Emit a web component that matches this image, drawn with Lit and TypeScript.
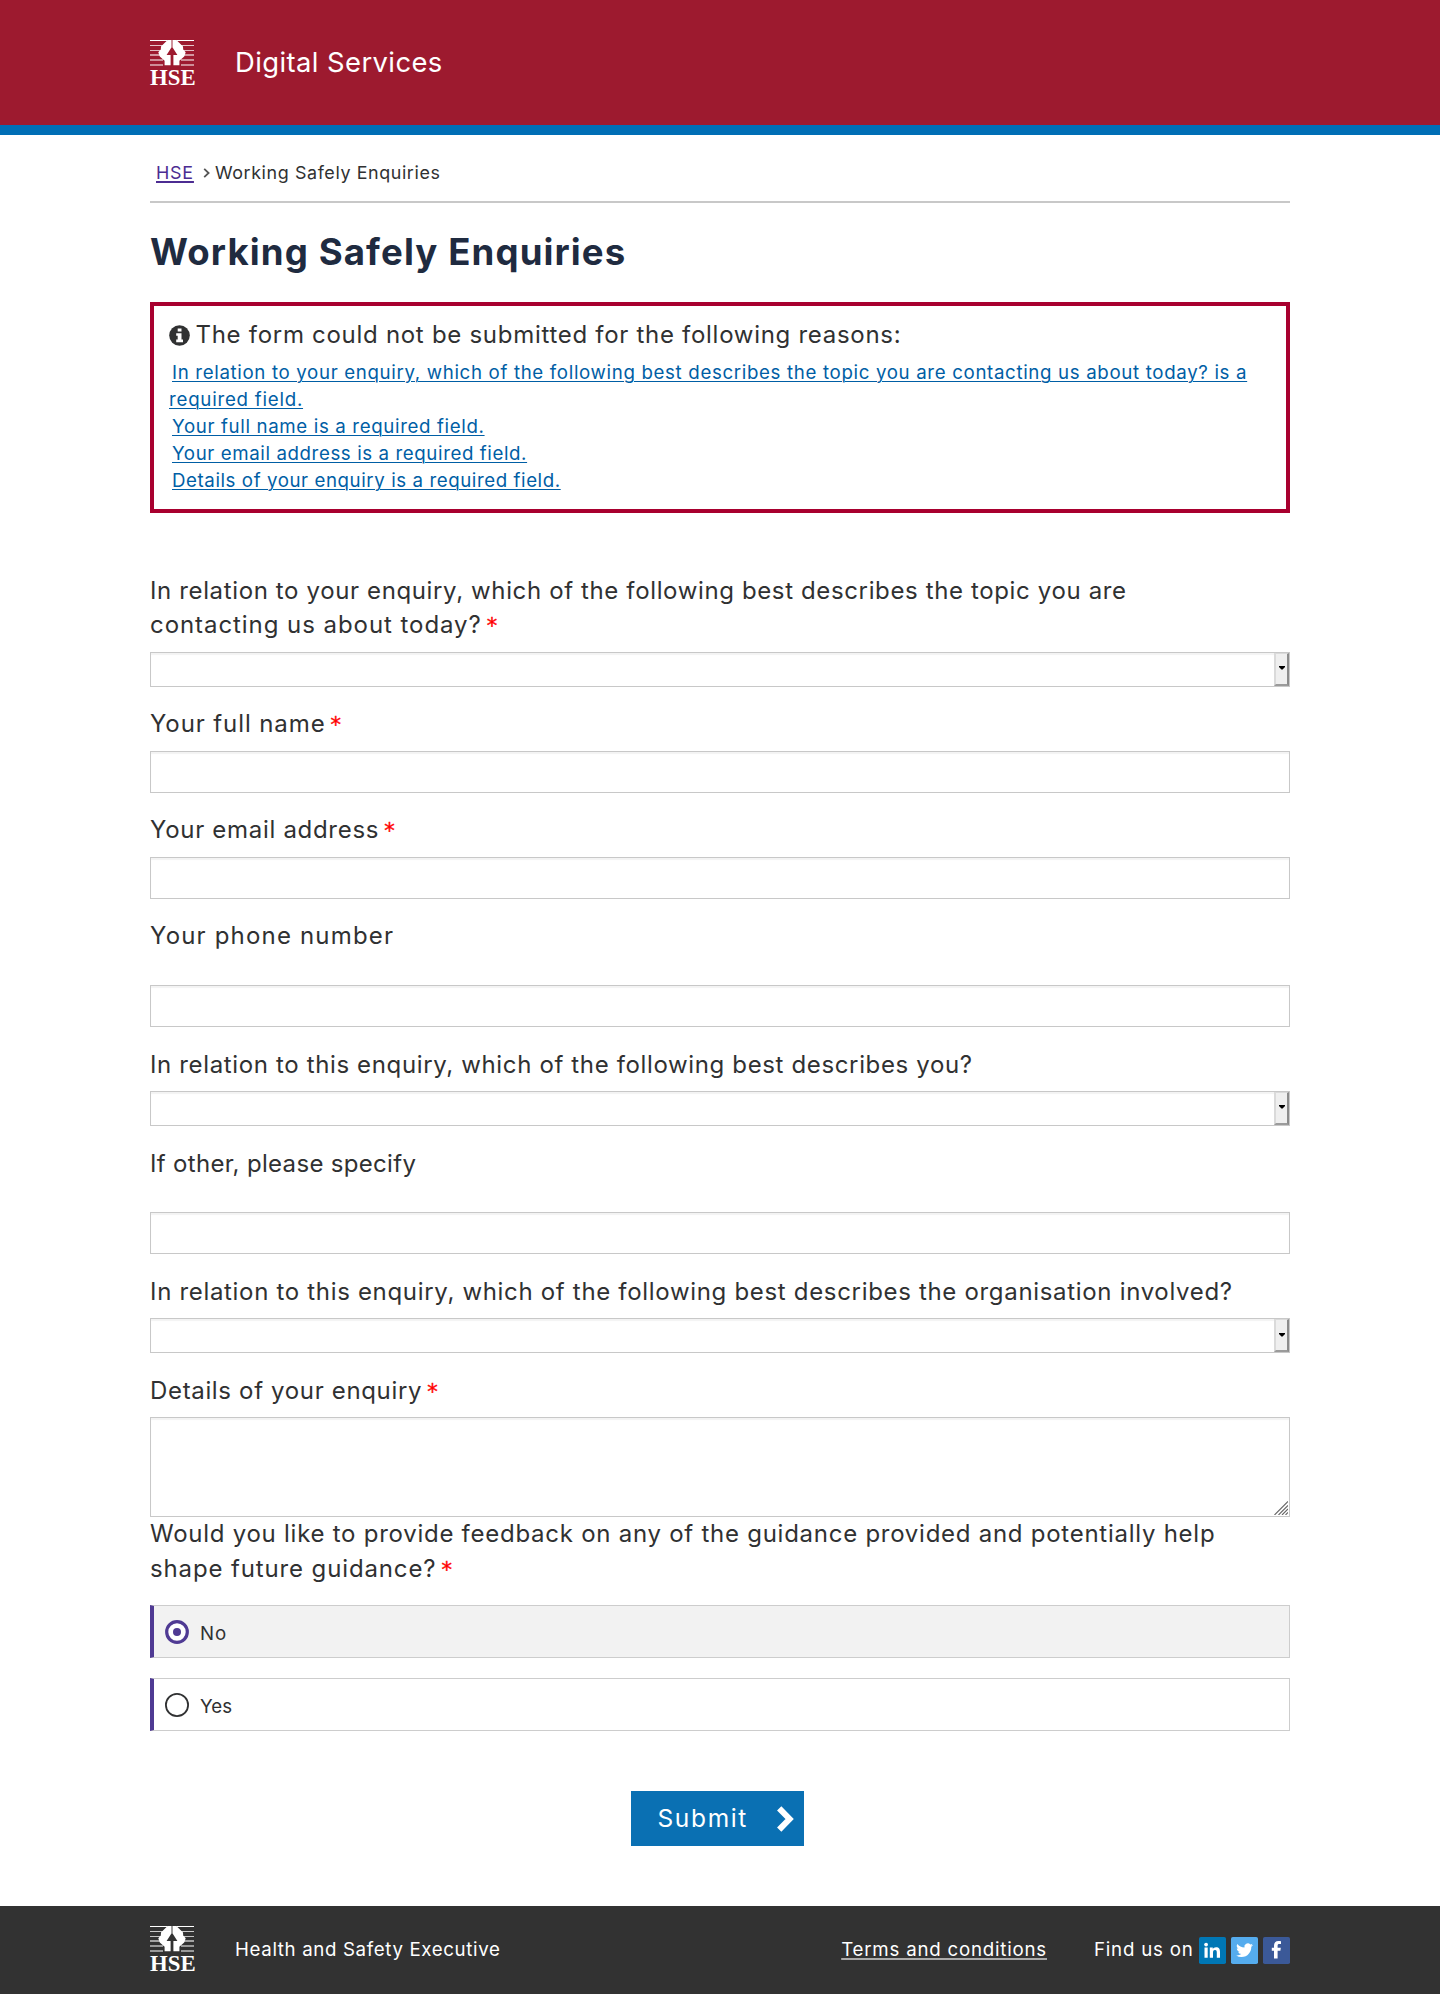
import { LitElement, html, svg, css, nothing } from "lit";
import { customElement, property, state } from "lit/decorators.js";

/** A run of text and the tracking (px) it is set with. */
type Line = [text: string, tracking: number];

interface Field {
  kind: "select" | "input" | "textarea";
  lines: Line[];
  required?: boolean;
  roomy?: boolean;
}

const run = ([text, tracking]: Line) => html`<span style="letter-spacing:${tracking}px">${text}</span>`;

const ERRORS: Line[][] = [
  [
    ["In relation to your enquiry, which of the following best describes the topic you are contacting us about today? is a", 0.655],
    ["required field.", 0.76],
  ],
  [["Your full name is a required field.", 0.64]],
  [["Your email address is a required field.", 0.595]],
  [["Details of your enquiry is a required field.", 0.575]],
];

const FIELDS: Field[] = [
  {
    kind: "select",
    required: true,
    lines: [
      ["In relation to your enquiry, which of the following best describes the topic you are", 0.63],
      ["contacting us about today?", 0.94],
    ],
  },
  { kind: "input", required: true, lines: [["Your full name", 0.9]] },
  { kind: "input", required: true, lines: [["Your email address", 0.7]] },
  { kind: "input", roomy: true, lines: [["Your phone number", 1.18]] },
  { kind: "select", lines: [["In relation to this enquiry, which of the following best describes you?", 0.64]] },
  { kind: "input", roomy: true, lines: [["If other, please specify", 0.32]] },
  {
    kind: "select",
    lines: [["In relation to this enquiry, which of the following best describes the organisation involved?", 0.68]],
  },
  { kind: "textarea", required: true, lines: [["Details of your enquiry", 0.66]] },
];

const starStyles = css`
  .star {
    color: #f00;
    font-family: "DejaVu Sans", sans-serif;
    font-size: 21px;
    margin-left: 5px;
    line-height: 20px;
    -webkit-text-stroke: 0.4px #f00;
  }
`;

@customElement("hse-logo")
export class HseLogo extends LitElement {
  static styles = css`
    :host {
      display: block;
      width: 45px;
      height: 45px;
    }
    svg {
      display: block;
      overflow: visible;
    }
    .word {
      font: 700 23.5px "Liberation Serif", "Times New Roman", serif;
      fill: #fff;
    }
    .gap {
      fill: var(--logo-ground);
    }
  `;
  render() {
    const bars: [number, number, number][] = [
      [0, 1, 1], [5, 1, 0.75], [10, 1, 0.7], [14, 2, 0.55], [19, 2, 0.5], [24, 2, 0.5],
    ];
    return html`<svg width="45" height="45" viewBox="0 0 45 45" role="img" aria-label="HSE">
      ${bars.map(([y, h, o]) => svg`<rect x="0" y=${y} width="44" height=${h} fill="#fff" fill-opacity=${o} />`)}
      <path class="gap" d="M18 0H26L31 5V26H13V5Z" />
      <path fill="#fff" d="M17.6 0H21.4V7.6L16.6 15H20.6V25.3H14.6V20.8L9.8 16.6L8.3 12.2L10.8 9.6L11 6.6Z" />
      <path fill="#fff" d="M26.4 0H22.6V7.6L27.4 15H23.4V25.3H29.4V20.8L34.2 16.6L35.7 12.2L33.2 9.6L33 6.6Z" />
      <rect x="21.4" y="0" width="1.2" height="7.6" fill="#fff" fill-opacity=".35" />
      <text class="word" x="0" y="44.7" textLength="45.6" lengthAdjust="spacingAndGlyphs">HSE</text>
    </svg>`;
  }
}

@customElement("form-field")
export class FormField extends LitElement {
  @property({ attribute: false }) field!: Field;

  static styles = [
    starStyles,
    css`
    :host {
      display: block;
    }
    .label {
      display: block;
      padding-top: 1px;
      margin-bottom: 8.9px;
      font-size: 24px;
      line-height: 34.5px;
      white-space: nowrap;
    }
    .label.roomy {
      margin-bottom: 30.9px;
    }
    .row {
      display: block;
    }
    .control {
      display: block;
      box-sizing: border-box;
      width: 100%;
      height: 42px;
      margin: 0;
      padding: 4px 8px;
      border: 1px solid #c8c8c8;
      border-radius: 0;
      background: #fff;
      box-shadow: inset 0 2px 1px #f3f3f3;
      font: inherit;
      font-size: 18px;
      outline: none;
      resize: none;
    }
    textarea.control {
      height: 100px;
    }
    .combo {
      display: flex;
      justify-content: flex-end;
      height: 35px;
      padding: 0;
    }
    .drop {
      box-sizing: border-box;
      display: flex;
      align-items: center;
      justify-content: center;
      width: 15px;
      height: 33px;
      padding: 0;
      background: #efefef;
      border-style: solid;
      border-width: 1px 2px 2px 2px;
      border-color: #dadada #8b8b8b #9b9b9b #dadada;
    }
    .drop svg {
      margin-top: -1px;
    }
    .area {
      position: relative;
    }
    .grip {
      position: absolute;
      right: 2px;
      bottom: 2px;
    }
  `,
  ];

  private control() {
    switch (this.field.kind) {
      case "select":
        return html`<div class="control combo" role="combobox" aria-expanded="false">
          <button class="drop" type="button" aria-label="Open">
            <svg width="6" height="4" viewBox="0 0 6 4"><path d="M0 0H6V1L3.6 3.4H2.4L0 1Z" fill="#000" /></svg>
          </button>
        </div>`;
      case "textarea":
        return html`<div class="area">
          <textarea class="control"></textarea>
          <svg class="grip" width="14" height="14" viewBox="0 0 14 14">
            <path d="M.5 14L14 .5M4.5 14L14 4.5M8 14L14 8M11.5 14L14 11.5" stroke="#666" stroke-width="1.1" fill="none" />
          </svg>
        </div>`;
      default:
        return html`<input class="control" type="text" />`;
    }
  }

  render() {
    const { lines, required, roomy } = this.field;
    return html`
      <label class="label ${roomy ? "roomy" : ""}">
        ${lines.map(
          (line, i) => html`<span class="row">${run(line)}${required && i === lines.length - 1
            ? html`<span class="star">*</span>`
            : nothing}</span>`,
        )}
      </label>
      ${this.control()}
    `;
  }
}

@customElement("app-root")
export class AppRoot extends LitElement {
  @state() private feedback = "No";

  static styles = [
    starStyles,
    css`
    :host {
      display: block;
      background: #fff;
      color: #303132;
      font-family: Inter, "Open Sans", sans-serif;
      font-size: 18.7px;
      font-kerning: normal;
    }
    * {
      box-sizing: border-box;
    }
    .wrap {
      width: 1140px;
      margin: 0 auto;
    }
    .top {
      background: #9d1a2f;
      border-bottom: 10px solid #006eb5;
      --logo-ground: #9d1a2f;
    }
    .top .wrap {
      display: flex;
      align-items: center;
      gap: 40px;
      height: 125px;
      color: #fff;
      font-size: 27.4px;
      line-height: 34px;
    }
    .top .wrap > span {
      padding-bottom: 2px;
    }
    .crumbs {
      display: flex;
      align-items: center;
      height: 68px;
      padding: 26px 0 16px 6px;
      border-bottom: 2px solid #c8c8c8;
      font-size: 17.9px;
      line-height: 24px;
    }
    .crumbs a {
      color: #4c2c92;
      text-decoration-thickness: 1.5px;
      text-underline-offset: 2px;
    }
    .chev {
      margin: 0 5px 0 9px;
    }
    h1 {
      margin: 27px 0 28px;
      color: #1f2b40;
      font-size: 36.6px;
      font-weight: 700;
      line-height: 44px;
      letter-spacing: 1.12px;
    }
    .alert {
      height: 211px;
      border: 4px solid #a8002f;
      padding: 12px 15px;
      white-space: nowrap;
    }
    .alert h2 {
      display: flex;
      align-items: center;
      gap: 5.5px;
      margin: 0 0 7px;
      font-size: 24px;
      font-weight: 400;
      line-height: 34px;
    }
    .alert ul {
      margin: 0;
      padding: 0;
      list-style: none;
      line-height: 27px;
    }
    .alert a {
      display: block;
      color: #005ea5;
      text-decoration: none;
    }
    .alert a span {
      text-decoration: underline;
      text-decoration-thickness: 1.3px;
      text-underline-offset: 1.5px;
    }
    .alert a .ln:first-child {
      padding-left: 3px;
    }
    .fields {
      display: flex;
      flex-direction: column;
      gap: 19.7px;
      margin-top: 59.7px;
    }
    .legend {
      margin: 0.2px 0 19px;
      font-size: 24px;
      line-height: 34.5px;
      white-space: nowrap;
    }
    .choice {
      display: flex;
      align-items: center;
      gap: 11px;
      height: 53px;
      margin-bottom: 20px;
      padding-left: 11px;
      border: 1px solid #cdcdcd;
      border-left: 4px solid #4f3a93;
      line-height: 24px;
      cursor: pointer;
    }
    .choice.on {
      background: #f2f2f2;
    }
    .choice span {
      padding-top: 4px;
    }
    .submit {
      display: flex;
      align-items: center;
      justify-content: space-between;
      width: 173px;
      height: 55px;
      margin: 60px 0 60px 481px;
      padding: 0 10px 0 26.5px;
      border: 0;
      background: #0a70b3;
      color: #fff;
      font: 400 24.5px/34px Inter, sans-serif;
      letter-spacing: 1.65px;
    }
    .submit span {
      padding-bottom: 1px;
    }
    footer {
      background: #323232;
      color: #fff;
      --logo-ground: #323232;
    }
    footer .wrap {
      display: flex;
      align-items: center;
      height: 88px;
      padding-bottom: 3px;
      line-height: 24px;
    }
    footer .wrap > span,
    .terms {
      padding-top: 2px;
    }
    .org {
      margin-left: 40px;
    }
    .terms {
      margin-left: auto;
      color: #fff;
      text-decoration-color: #aaa;
      text-decoration-thickness: 2px;
      text-underline-offset: 2px;
      text-decoration-skip-ink: none;
    }
    .find {
      margin: 0 5.5px 0 47px;
    }
    .social {
      display: flex;
      gap: 5px;
      padding-top: 4px;
    }
    .social svg {
      display: block;
    }
  `,
  ];

  private choice(value: string, tracking: number) {
    const on = this.feedback === value;
    return html`<div class="choice ${on ? "on" : ""}" role="radio" aria-checked=${on} @click=${() => (this.feedback = value)}>
      <svg width="24" height="24" viewBox="0 0 24 24">
        ${on
          ? svg`<circle cx="12" cy="12" r="10.3" fill="#fff" stroke="#4f3a93" stroke-width="3.2" /><circle cx="12" cy="12" r="4" fill="#4f3a93" />`
          : svg`<circle cx="12" cy="12" r="11.1" fill="#fff" stroke="#303132" stroke-width="1.8" />`}
      </svg>
      ${run([value, tracking])}
    </div>`;
  }

  render() {
    return html`
      <header class="top">
        <div class="wrap"><hse-logo></hse-logo>${run(["Digital Services", 0.42])}</div>
      </header>
      <main class="wrap">
        <nav class="crumbs">
          <a href="#">${run(["HSE", 0.8])}</a>
          <svg class="chev" width="7" height="12" viewBox="0 0 7 12">
            <path d="M1.2 1.8L5.6 6L1.2 10.2" fill="none" stroke="#555" stroke-width="1.8" />
          </svg>
          ${run(["Working Safely Enquiries", 0.6])}
        </nav>
        <h1>Working Safely Enquiries</h1>
        <section class="alert">
          <h2>
            <svg width="21" height="21" viewBox="0 0 21 21">
              <circle cx="10.5" cy="10.5" r="10.3" fill="#303132" />
              <path d="M8.7 3.4H12.5V6.6H8.7ZM7.2 8.2H12.5V14.6H14V17.2H7.2V14.6H8.7V10.8H7.2Z" fill="#fff" />
            </svg>
            ${run(["The form could not be submitted for the following reasons:", 0.71])}
          </h2>
          <ul>
            ${ERRORS.map((lines) => html`<li><a href="#">${lines.map((l) => html`<div class="ln">${run(l)}</div>`)}</a></li>`)}
          </ul>
        </section>
        <div class="fields">${FIELDS.map((field) => html`<form-field .field=${field}></form-field>`)}</div>
        <div role="radiogroup">
          <div class="legend">
            <div>${run(["Would you like to provide feedback on any of the guidance provided and potentially help", 0.74])}</div>
            <div>${run(["shape future guidance?", 0.87])}<span class="star">*</span></div>
          </div>
          ${this.choice("No", 1)} ${this.choice("Yes", 0)}
        </div>
        <button class="submit" type="button">
          <span>Submit</span>
          <svg width="17" height="26" viewBox="0 0 17 26">
            <path d="M2.2 2.4L12.6 13L2.2 23.6" fill="none" stroke="#fff" stroke-width="6" />
          </svg>
        </button>
      </main>
      <footer>
        <div class="wrap">
          <hse-logo></hse-logo>
          <span class="org">${run(["Health and Safety Executive", 0.64])}</span>
          <a class="terms" href="#">${run(["Terms and conditions", 0.78])}</a>
          <span class="find">${run(["Find us on", 0.78])}</span>
          <div class="social">
            <svg width="27" height="27" viewBox="0 0 27 27" role="img" aria-label="LinkedIn">
              <rect width="27" height="27" rx="1.8" fill="#0077b5" />
              <circle cx="7.1" cy="7.6" r="1.9" fill="#fff" />
              <path d="M5.5 10.6H8.7V20.8H5.5ZM10.8 10.6H13.8V12C14.4 11 15.5 10.3 17 10.3C20.2 10.3 21 12.3 21 15.1V20.8H17.8V15.8C17.8 14.5 17.7 13.1 16 13.1C14.3 13.1 14 14.4 14 15.7V20.8H10.8Z" fill="#fff" />
            </svg>
            <svg width="27" height="27" viewBox="0 0 27 27" role="img" aria-label="Twitter">
              <rect width="27" height="27" rx="1.8" fill="#55acee" />
              <g transform="translate(5.2 4.8) scale(.7)">
                <path d="M23.95 4.57a10 10 0 0 1-2.82.77 4.96 4.96 0 0 0 2.16-2.72c-.95.55-2 .96-3.13 1.18a4.92 4.92 0 0 0-8.38 4.48C7.69 8.1 4.07 6.13 1.64 3.16a4.92 4.92 0 0 0 1.52 6.57 4.9 4.9 0 0 1-2.23-.61v.06a4.92 4.92 0 0 0 3.95 4.83 5 5 0 0 1-2.21.08 4.94 4.94 0 0 0 4.6 3.42A9.87 9.87 0 0 1 0 19.54a13.99 13.99 0 0 0 7.55 2.21c9.05 0 14-7.5 14-13.98 0-.21 0-.42-.02-.63a9.94 9.94 0 0 0 2.46-2.55z" fill="#fff" />
              </g>
            </svg>
            <svg width="27" height="27" viewBox="0 0 27 27" role="img" aria-label="Facebook">
              <rect width="27" height="27" rx="1.8" fill="#3b5998" />
              <path d="M11 21.4V13.8H8.8V10.8H11V8.8C11 5.6 12.6 4 15.4 4C16.8 4 17.6 4.1 18 4.2V7H16.3C15 7 14.6 7.6 14.6 8.6V10.8H17.8L17.4 13.8H14.6V21.4Z" fill="#fff" />
            </svg>
          </div>
        </div>
      </footer>
    `;
  }
}
